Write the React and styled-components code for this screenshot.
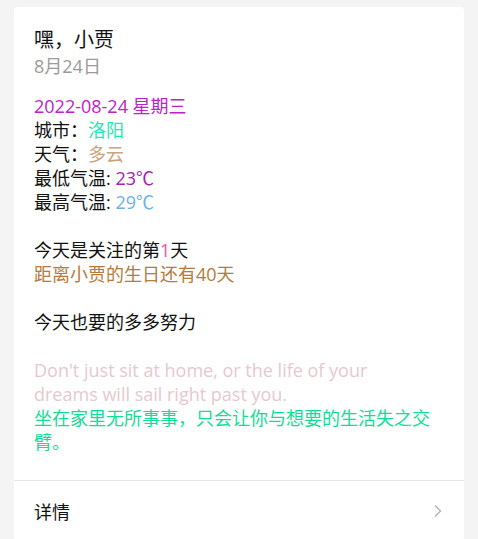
import React from 'react';
import styled, { createGlobalStyle } from 'styled-components';

const GlobalStyle = createGlobalStyle`
  html, body {
    margin: 0;
    padding: 0;
    background: #f4f4f4;
  }
  body {
    font-family: "Open Sans", "Noto Sans CJK SC", sans-serif;
    color: #111;
  }
`;

const weather = {
  date: '2022-08-24 星期三',
  city: '洛阳',
  sky: '多云',
  low: '23℃',
  high: '29℃',
};

const App = () => {
  return (
    <Page>
      <GlobalStyle />
      <Card>
        <Body>
          <Greeting>嘿，小贾</Greeting>
          <SubDate>8月24日</SubDate>

          <Section $gap={16}>
            <Line $color="#bd22c8">{weather.date}</Line>
            <Line>城市：<Tint $color="#1de9b6">{weather.city}</Tint></Line>
            <Line>天气：<Tint $color="#c9a47f">{weather.sky}</Tint></Line>
            <Line>最低气温: <Tint $color="#a623ad">{weather.low}</Tint></Line>
            <Line>最高气温: <Tint $color="#6cb2ea">{weather.high}</Tint></Line>
          </Section>

          <Section>
            <Line>今天是关注的第<Tint $color="#ff4f9e">1</Tint>天</Line>
            <Line $color="#b57a3c">距离小贾的生日还有40天</Line>
          </Section>

          <Section>
            <Line>今天也要的多多努力</Line>
          </Section>

          <Section>
            <Line $color="#e6c9cf">Don't just sit at home, or the life of your dreams will sail right past you.</Line>
            <Line $color="#12dd96">坐在家里无所事事，只会让你与想要的生活失之交臂。</Line>
          </Section>
        </Body>

        <Footer>
          <span>详情</span>
          <Chevron width="10" height="14" viewBox="0 0 10 14">
            <path d="M2 1.5 L7.5 7 L2 12.5" fill="none" stroke="#b3b3b3" strokeWidth="1.4" />
          </Chevron>
        </Footer>
      </Card>
    </Page>
  );
};

const Page = styled.div`
  padding: 7px 14px 0;
  min-height: 539px;
  box-sizing: border-box;
`;

const Card = styled.div`
  background: #fff;
  border-radius: 4px;
  width: 450px;
`;

const Body = styled.div`
  padding: 20px 32px 26px 20px;
  font-size: 18px;
  line-height: 24px;
`;

const Greeting = styled.div`
  font-size: 20px;
  line-height: 26px;
  color: #111;
`;

const SubDate = styled.div`
  color: #9b9b9b;
  font-size: 18px;
  line-height: 24px;
  margin-top: 1px;
`;

const Section = styled.div`
  margin-top: ${props => props.$gap ?? 24}px;
`;

const Line = styled.div`
  color: ${props => props.$color || '#111'};
`;

const Tint = styled.span`
  color: ${props => props.$color};
`;

const Footer = styled.div`
  display: flex;
  align-items: center;
  justify-content: space-between;
  height: 60px;
  padding: 0 20px;
  border-top: 1px solid #e6e6e6;
  font-size: 18px;
  color: #111;
`;

const Chevron = styled.svg`
  display: block;
  margin-right: 1px;
`;

export default App;
